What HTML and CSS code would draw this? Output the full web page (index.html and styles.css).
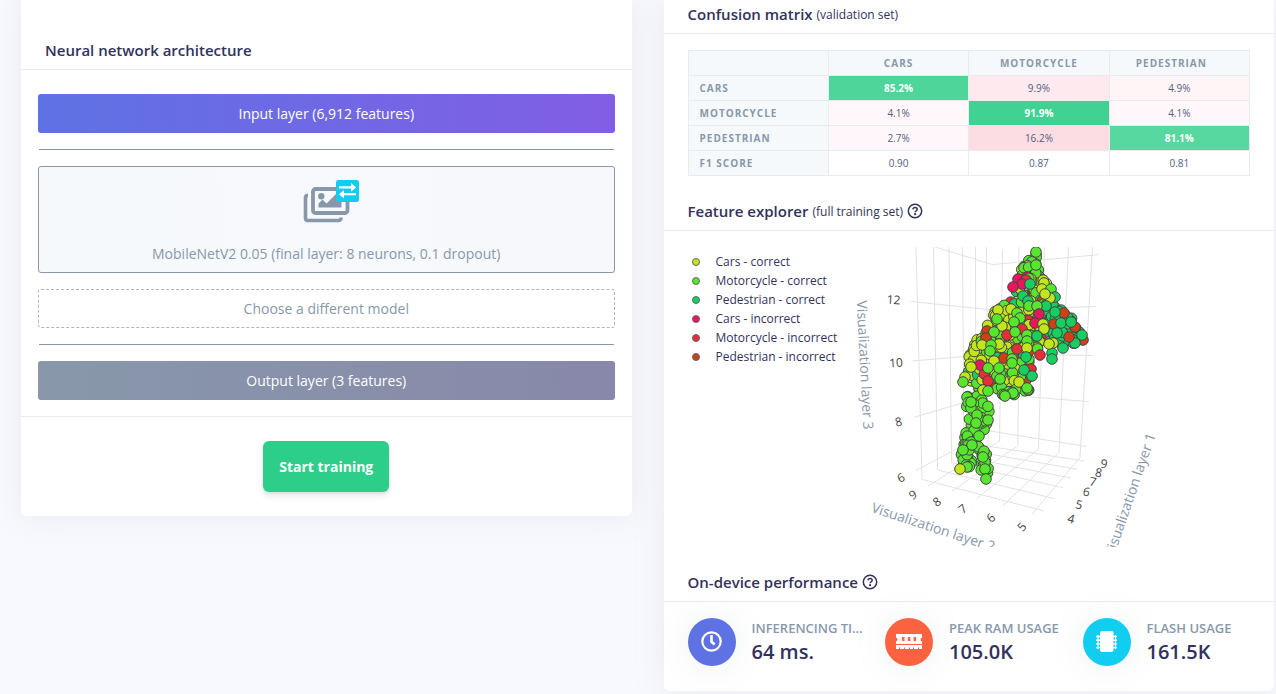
FILE: index.html
```html
<!DOCTYPE html>
<html lang="en">
<head>
<meta charset="utf-8">
<title>Neural network training</title>
<link rel="stylesheet" href="styles.css">
</head>
<body>
<main class="page">
  <section class="card card-network">
    <h2 class="card-title network-title">Neural network architecture</h2>
    <div class="layers">
      <div class="layer layer-input">Input layer (6,912 features)</div>
      <hr class="connector">
      <button type="button" class="layer layer-model">
        <svg class="model-icon" viewBox="303 179 57 45" aria-hidden="true">
          <path d="M308 195.500h-.5q-2 0-2 2V218q0 2.500 2.500 2.500h30.500q2.500 0 2.500-3" fill="none" stroke="#8898aa" stroke-width="3.600"/>
          <rect x="313" y="189" width="34.500" height="24" rx="2.500" fill="none" stroke="#8898aa" stroke-width="3.800"/>
          <circle cx="321.300" cy="196.300" r="3.200" fill="#8898aa"/>
          <path d="M318.500 207.500v-4l4-4 4 4 9.500-9.500 5.500 5.500v8z" fill="#8898aa"/>
          <rect x="336" y="180" width="23" height="22" rx="2.500" fill="#11cdef"/>
          <path d="M339 186.200h12v-3.200l5 4.400-5 4.300v-3.200h-12zM356 193h-12v-3.100l-5 4.300 5 4.400v-3.300h12z" fill="#fff"/>
        </svg>
        <span>MobileNetV2 0.05 (final layer: 8 neurons, 0.1 dropout)</span>
      </button>
      <button type="button" class="layer layer-choose">Choose a different model</button>
      <hr class="connector">
      <div class="layer layer-output">Output layer (3 features)</div>
    </div>
    <footer class="card-footer"><button type="button" class="train">Start training</button></footer>
  </section>

  <section class="card card-results">
    <h2 class="card-title">Confusion matrix <small>(validation set)</small></h2>
    <div class="matrix-wrap">
      <table class="matrix">
        <thead><tr><td></td><th scope="col">Cars</th><th scope="col">Motorcycle</th><th scope="col">Pedestrian</th></tr></thead>
        <tbody>
          <tr><th scope="row">Cars</th><td class="hit hit-mid">85.2%</td><td class="miss-2">9.9%</td><td class="miss-1">4.9%</td></tr>
          <tr><th scope="row">Motorcycle</th><td class="miss-0">4.1%</td><td class="hit hit-high">91.9%</td><td class="miss-0">4.1%</td></tr>
          <tr><th scope="row">Pedestrian</th><td class="miss-0">2.7%</td><td class="miss-3">16.2%</td><td class="hit hit-low">81.1%</td></tr>
          <tr><th scope="row">F1 score</th><td>0.90</td><td>0.87</td><td>0.81</td></tr>
        </tbody>
      </table>
    </div>

    <h2 class="card-title">Feature explorer <small>(full training set)</small>
      <svg class="help" viewBox="0 0 16 16" role="img" aria-label="Help"><circle cx="8" cy="8" r="6.700"/><path d="M5.900 6.400q.2-1.900 2.200-1.900 2.100 0 2.100 1.800 0 1-1.100 1.600-1 .5-1 1.300"/><circle class="dot" cx="8.100" cy="11.200" r="1.100"/></svg>
    </h2>
    <div class="explorer">
      <ul class="legend">
        <li><i class="key cars-ok"></i>Cars - correct</li>
        <li><i class="key moto-ok"></i>Motorcycle - correct</li>
        <li><i class="key ped-ok"></i>Pedestrian - correct</li>
        <li><i class="key cars-bad"></i>Cars - incorrect</li>
        <li><i class="key moto-bad"></i>Motorcycle - incorrect</li>
        <li><i class="key ped-bad"></i>Pedestrian - incorrect</li>
      </ul>
      <svg class="plot" viewBox="848 247 400 300" role="img" aria-label="Feature explorer plot">
        <g class="grid">
          <path d="M916 247L922 479M933.500 247L937.600 470M949 247L951.600 462.600M962.500 247L964 456M975.500 247L976 451M986.500 247L988 446M1002.600 249L999.500 442M1019 247L1018 445M1044.500 247L1038.500 449M1068.500 247L1059 452.500M1092.500 247L1080 456.500"/>
          <path d="M935 247L992.600 264.600L1099 254.600M911 301.500L993 310L1096 306.500M912.500 361L993 354L1092.500 355.500M914 417.300L992 394L1089 401.600M916 470.500L990 431L1086.500 446.500"/>
          <path d="M922 479.300L1044 511M937.600 470L1054 498.600M951.600 462.600L1062.600 487.600M963 456.600L1070.600 478M975 451.600L1077.600 469.300M986.600 446L1084.300 461"/>
          <path d="M928 486L999 441.600M951.600 491.600L1018 445.600M976.600 498.600L1038.300 449.300M1003 505.600L1059 452.600M1032.300 514L1080.600 456.600"/>
        </g>
        <g class="points"></g>
        <g class="ticks">
          <text transform="translate(893.500 300) rotate(4)" y="4">12</text>
          <text transform="translate(896 363) rotate(-4)" y="4">10</text>
          <text transform="translate(898.500 422) rotate(-14)" y="4">8</text>
          <text transform="translate(901 478) rotate(-26)" y="4">6</text>
          <text transform="translate(913 495) rotate(-32)" y="4">9</text>
          <text transform="translate(937 502) rotate(-35)" y="4">8</text>
          <text transform="translate(963 509) rotate(-39)" y="4">7</text>
          <text transform="translate(991 518) rotate(-43)" y="4">6</text>
          <text transform="translate(1022 527) rotate(-48)" y="4">5</text>
          <text transform="translate(1104 464) rotate(8)" y="4">9</text>
          <text transform="translate(1098.500 473) rotate(10)" y="4">8</text>
          <text transform="translate(1093 482) rotate(11)" y="4">7</text>
          <text transform="translate(1086.500 492) rotate(12)" y="4">6</text>
          <text transform="translate(1079 505) rotate(13)" y="4">5</text>
          <text transform="translate(1071 519) rotate(15)" y="4">4</text>
        </g>
        <g class="axis-titles">
          <text transform="translate(864 365) rotate(87)" y="4">Visualization layer 3</text>
          <text transform="translate(933 528) rotate(18)" y="4">Visualization layer 2</text>
          <text transform="translate(1131 495) rotate(-71)" y="4">Visualization layer 1</text>
        </g>
      </svg>
    </div>

    <h2 class="card-title">On-device performance
      <svg class="help" viewBox="0 0 16 16" role="img" aria-label="Help"><circle cx="8" cy="8" r="6.700"/><path d="M5.900 6.400q.2-1.900 2.200-1.900 2.100 0 2.100 1.800 0 1-1.100 1.600-1 .5-1 1.300"/><circle class="dot" cx="8.100" cy="11.200" r="1.100"/></svg>
    </h2>
    <div class="stats">
      <div class="stat">
        <span class="badge badge-time"><svg viewBox="0 0 48 48" aria-hidden="true"><circle cx="23.500" cy="23.500" r="9.200" fill="none" stroke="#fff" stroke-width="2.200"/><path d="M23.500 17v6.800l3.200 2.700" fill="none" stroke="#fff" stroke-width="2.600"/></svg></span>
        <div class="stat-text"><div class="stat-label">INFERENCING TIME</div><div class="stat-value">64 ms.</div></div>
      </div>
      <div class="stat">
        <span class="badge badge-ram"><svg viewBox="0 0 48 48" aria-hidden="true"><path fill-rule="evenodd" fill="#fff" d="M11 16h26v3.500q-1.500.5-1.500 2t1.500 2V26H11v-2.500q1.500-.5 1.500-2t-1.500-2zM17 19v4h2.500v-4zM22.800 19v4h2.500v-4zM28.600 19v4h2.500v-4z"/><path fill="#fff" d="M11 27h26v4h-3v-1.500h-1V31h-4v-1.500h-1V31h-3v-1.500h-1V31h-4v-1.500h-1V31h-4v-1.500h-1V31h-3z"/></svg></span>
        <div class="stat-text"><div class="stat-label">PEAK RAM USAGE</div><div class="stat-value">105.0K</div></div>
      </div>
      <div class="stat">
        <span class="badge badge-flash"><svg viewBox="0 0 48 48" aria-hidden="true"><rect x="17" y="13" width="13.500" height="21" rx="2" fill="#fff"/><path d="M13 18.500h21M13 22.200h21M13 25.900h21M13 29.600h21" stroke="#fff" stroke-width="1.400"/><path d="M15 17v14M32.500 17v14" stroke="#fff" stroke-width="1.200"/></svg></span>
        <div class="stat-text"><div class="stat-label">FLASH USAGE</div><div class="stat-value">161.5K</div></div>
      </div>
    </div>
  </section>
</main>
<script src="plot.js"></script>
</body>
</html>
```

FILE: styles.css
```css
* { box-sizing: border-box; }
body {
  margin: 0;
  background: #f8f9fe;
  color: #525f7f;
  font-family: "Open Sans", sans-serif;
  font-size: 14px;
  line-height: 21px;
}
button { font: inherit; cursor: pointer; }
.page {
  display: grid;
  grid-template-columns: 1fr 1fr;
  gap: 32px;
  align-items: start;
  padding: 0 2px 3px 21px;
}
.card {
  min-width: 0;
  background: #fff;
  border-radius: 0 0 6px 6px;
  box-shadow: 0 0 32px rgba(136, 152, 170, .15);
}
.card-title {
  display: flex;
  align-items: center;
  gap: 4px;
  margin: 0;
  padding: 0 24px 8px;
  border-bottom: 1px solid #e9ecef;
  color: #32325d;
  font-size: 15px;
  font-weight: 600;
  line-height: 22px;
}
.card-title small { padding-top: 2px; font-size: 12px; font-weight: 400; line-height: 20px; }
.network-title { padding-top: 39px; }
.card-results > .card-title:first-child { padding-top: 3px; }
.help { width: 16px; height: 16px; fill: none; stroke: #32325d; stroke-width: 1.500px; }
.help .dot { fill: #32325d; stroke: none; }

.layers {
  display: flex;
  flex-direction: column;
  gap: 16px;
  padding: 24px 17px 16px;
}
.layer {
  width: 100%;
  padding: 9px;
  border-radius: 3px;
  text-align: center;
  color: #fff;
}
.layer-input { background: linear-gradient(87deg, #5e72e4, #825ee4); }
.layer-output { background: linear-gradient(87deg, #8898aa, #8888aa); }
.layer-model {
  display: flex;
  flex-direction: column;
  align-items: center;
  gap: 19px;
  padding: 12px 8px 8px;
  border: 1px solid #8898aa;
  background: linear-gradient(87deg, #f6f9fc, #f7f8fc);
  color: #8898aa;
}
.model-icon { width: 67px; height: 45px; padding-left: 10px; }
.layer-choose { padding: 8px; border: 1px dashed #adb5bd; background: #fff; color: #8898aa; }
.connector { width: calc(100% - 2px); height: 1px; margin: 0 1px; border: 0; background: #8898aa; }
.card-footer { padding: 24px; border-top: 1px solid #e9ecef; text-align: center; }
.train {
  display: block;
  margin: 0 auto;
  padding: 15px 16px;
  border: 0;
  border-radius: 6px;
  background: #2dce89;
  color: #fff;
  font-weight: 700;
  box-shadow: 0 4px 6px rgba(50, 50, 93, .11), 0 1px 3px rgba(0, 0, 0, .08);
}

.matrix-wrap { padding: 16px 24px 24px; }
.matrix { width: 100%; table-layout: fixed; border-collapse: collapse; }
.matrix th, .matrix td {
  height: 25px;
  padding: 0 11px;
  border: 1px solid #e9ecef;
  font-size: 10px;
  line-height: 16px;
  text-align: center;
}
.matrix th, .matrix thead td { background: #f6f9fc; }
.matrix th { color: #8898aa; font-weight: 700; letter-spacing: 1px; text-transform: uppercase; }
.matrix tbody th { text-align: left; }
.matrix thead th:last-child { padding-right: 27px; }
.matrix .hit { color: #fff; font-weight: 700; }
.matrix .hit-low { background: #57d8a0; }
.matrix .hit-mid { background: #4dd59a; }
.matrix .hit-high { background: #3fd293; }
.matrix .miss-0 { background: #fff7fa; }
.matrix .miss-1 { background: #fff5f7; }
.matrix .miss-2 { background: #feeaee; }
.matrix .miss-3 { background: #fddde4; }

.explorer { display: flex; padding: 16px 24px 24px; }
.legend {
  flex: 0 0 160px;
  margin: 0;
  padding: 5px 0 0 4px;
  list-style: none;
  color: #32325d;
  font-size: 12px;
  line-height: 19px;
}
.legend li { display: flex; align-items: center; gap: 16px; white-space: nowrap; }
.key { width: 8px; height: 8px; border: 1px solid #666; border-radius: 50%; }
.cars-ok { background: #c1e619; }
.moto-ok { background: #57e62e; }
.ped-ok { background: #17cf61; }
.cars-bad { background: #e6175c; }
.moto-bad { background: #e62e39; }
.ped-bad { background: #cf4017; }
.plot { width: 400px; height: 300px; overflow: hidden; }
.grid { fill: none; stroke: #e2e2e2; stroke-width: 1px; }
.points { stroke: #444; stroke-width: 1px; }
.ticks { fill: #444; font-size: 12px; text-anchor: middle; }
.axis-titles { fill: #8898aa; font-size: 14px; text-anchor: middle; }

.stats {
  display: grid;
  grid-template-columns: repeat(3, minmax(0, 1fr));
  gap: 20px;
  padding: 16px 14px 25px 24px;
}
.stat { display: flex; gap: 16px; }
.badge {
  flex: 0 0 48px;
  height: 48px;
  border-radius: 50%;
  box-shadow: 0 0 32px rgba(136, 152, 170, .15);
}
.badge svg { display: block; }
.badge-time { background: #5e72e4; }
.badge-ram { background: #fb6340; }
.badge-flash { background: #11cdef; }
.stat-text { min-width: 0; }
.stat-label {
  overflow: hidden;
  color: #8898aa;
  font-size: 13px;
  font-weight: 600;
  line-height: 20px;
  text-overflow: ellipsis;
  white-space: nowrap;
}
.stat-value { color: #32325d; font-size: 20px; font-weight: 600; line-height: 28px; }
```

FILE: plot.js
```js
const COLORS = { Y: '#c1e619', G: '#57e62e', T: '#17cf61', C: '#e6175c', R: '#e62e39', O: '#cf4017' };

// Dense clusters: outline, number of samples, class mix.
const CLUSTERS = [
  [[[1030, 258], [1037, 250], [1038, 266], [1041, 278], [1020, 282], [1021, 266]], 34, 'GGGGGTY'],
  [[[1018, 280], [1038, 272], [1048, 284], [1055, 300], [1020, 304], [1015, 288]], 70, 'GGYYYTTC'],
  [[[1018, 298], [1045, 300], [1050, 320], [1050, 338], [1030, 356], [1030, 378], [1010, 390], [978, 390], [965, 376], [969, 350], [984, 325], [998, 308]], 300, 'YYYYYYYGGGGGTTRO'],
  [[[1045, 300], [1058, 307], [1074, 320], [1083, 337], [1074, 344], [1058, 342], [1046, 330]], 110, 'TTTTTTTTO'],
  [[[1026, 385], [1030, 390], [1008, 398], [1002, 394]], 14, 'G'],
  [[[967, 395], [976, 394], [990, 404], [990, 422], [981, 434], [977, 444], [962, 448], [966, 420]], 60, 'G'],
  [[[961, 442], [973, 442], [971, 468], [960, 468]], 20, 'G'],
  [[[978, 446], [986, 450], [989, 476], [983, 480], [979, 464]], 20, 'G']
];

// Points nearest to the camera, in drawing order.
const FRONT = `G 1036 252,G 1036 265,C 1018 279,R 1026 280,C 1022 284,C 1013 287,T 1030 284,Y 1044 283,Y 1042 289,
G 1051 289,T 1055 297,Y 1050 298,Y 1045 294,T 1023 296,T 1028 301,T 1046 306,G 1029 306,G 1037 306,Y 998 310,Y 1011 309,
G 1017 313,G 1020 318,G 1014 322,C 1039 314,C 1035 323,Y 1002 326,G 997 319,Y 1043 324,Y 1044 329,T 1037 336,
O 1064 313,T 1055 312,O 1054 324,T 1061 323,O 1075 327,T 1071 322,T 1057 333,O 1083 340,T 1082 335,T 1075 343,O 1069 337,
T 1063 348,T 1052 353,T 1052 359,R 1007 335,R 1022 329,G 1015 332,G 1027 335,G 1027 341,T 1037 336,Y 1053 343,Y 1049 344,
O 987 331,O 986 338,G 994 332,Y 982 345,Y 999 344,G 991 345,G 990 351,R 1017 349,Y 1027 348,O 1004 358,R 1040 355,
Y 994 361,T 1026 357,G 1012 359,G 1012 363,C 980 365,Y 971 367,G 988 368,G 999 368,R 1031 369,T 1024 370,T 1032 376,
Y 965 377,G 963 382,G 1000 379,Y 1019 382,R 988 381,Y 983 390,G 988 391,G 1027 388,G 1013 393,G 1005 396,G 971 402,
G 977 415,G 976 423,G 988 420,G 979 436,G 972 445,G 963 450,G 984 451,G 983 457,G 967 467,Y 960 469,G 985 469,G 986 479`;

let seed = 7;
const random = () => {
  seed = (seed * 1664525 + 1013904223) % 4294967296;
  return seed / 4294967296;
};

const inside = (x, y, outline) => {
  let hit = false;
  outline.forEach(([x1, y1], i) => {
    const [x2, y2] = outline[(i + 1) % outline.length];
    if ((y1 > y) !== (y2 > y) && x < (x2 - x1) * (y - y1) / (y2 - y1) + x1) hit = !hit;
  });
  return hit;
};

const layer = document.querySelector('.points');
const draw = (x, y, type) => {
  const dot = document.createElementNS('http://www.w3.org/2000/svg', 'circle');
  dot.setAttribute('cx', x);
  dot.setAttribute('cy', y);
  dot.setAttribute('r', 5.3);
  dot.setAttribute('fill', COLORS[type]);
  layer.append(dot);
};

for (const [outline, count, mix] of CLUSTERS) {
  const xs = outline.map(p => p[0]);
  const ys = outline.map(p => p[1]);
  const left = Math.min(...xs), top = Math.min(...ys);
  const width = Math.max(...xs) - left, height = Math.max(...ys) - top;
  let placed = 0;
  while (placed < count) {
    const x = left + random() * width;
    const y = top + random() * height;
    if (!inside(x, y, outline)) continue;
    draw(x.toFixed(1), y.toFixed(1), mix[Math.floor(random() * mix.length)]);
    placed += 1;
  }
}
for (const item of FRONT.split(',')) {
  const [type, x, y] = item.trim().split(' ');
  draw(x, y, type);
}
```
